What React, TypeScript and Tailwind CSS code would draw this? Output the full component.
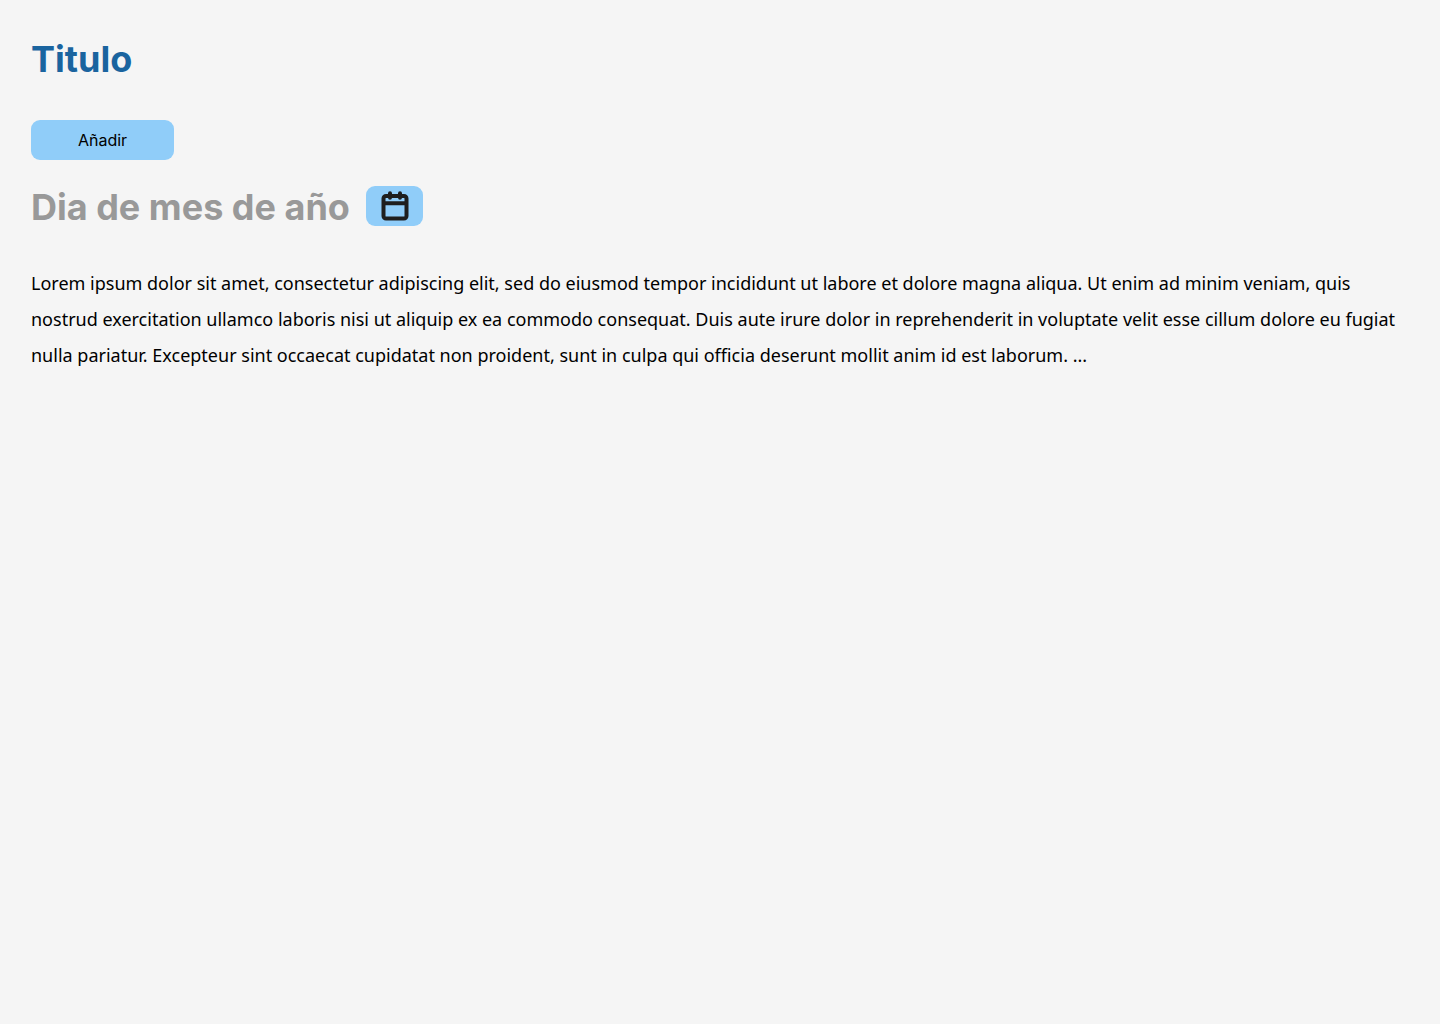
export default function App() {
  return (
    <main className="min-h-screen bg-[#f5f5f5] px-[31px] pt-9 font-['Inter',sans-serif] text-black">
      <h1 className="text-4xl leading-[46px] font-bold text-[#1a649f]">Titulo</h1>
      <button type="button" className="mt-[38px] flex h-10 w-[143px] items-center justify-center rounded-[9px] bg-[#90cdf9] text-base">
        Añadir
      </button>
      <div className="mt-6 flex items-center gap-4">
        <h2 className="pt-0.5 text-4xl leading-[42px] font-bold text-[#999999]">Dia de mes de año</h2>
        <button type="button" aria-label="Elegir fecha" className="flex h-10 w-[57px] items-center justify-center rounded-[9px] bg-[#90cdf9]">
          <svg className="h-8 w-8" viewBox="0 0 32 32" fill="none" stroke="#1e1e1e" strokeWidth="4" strokeLinecap="round" strokeLinejoin="round" aria-hidden="true">
            <path d="M12 3.3v4.5M22 3.3v4.5M5.5 13.3h23M8 5.9h18a2.5 2.5 0 0 1 2.5 2.5v17.700a2.5 2.5 0 0 1-2.5 2.5H8a2.5 2.5 0 0 1-2.5-2.5V8.4A2.5 2.5 0 0 1 8 5.9Z" />
          </svg>
        </button>
      </div>
      <p className="mt-[37px] font-['Noto_Sans',sans-serif] text-lg leading-9">
        Lorem ipsum dolor sit amet, consectetur adipiscing elit, sed do eiusmod tempor incididunt ut labore et dolore magna aliqua. Ut enim ad minim veniam, quis nostrud exercitation ullamco laboris nisi ut aliquip ex ea commodo consequat. Duis aute irure dolor in reprehenderit in voluptate velit esse cillum dolore eu fugiat nulla pariatur. Excepteur sint occaecat cupidatat non proident, sunt in culpa qui officia deserunt mollit anim id est laborum. ...
      </p>
    </main>
  );
}
